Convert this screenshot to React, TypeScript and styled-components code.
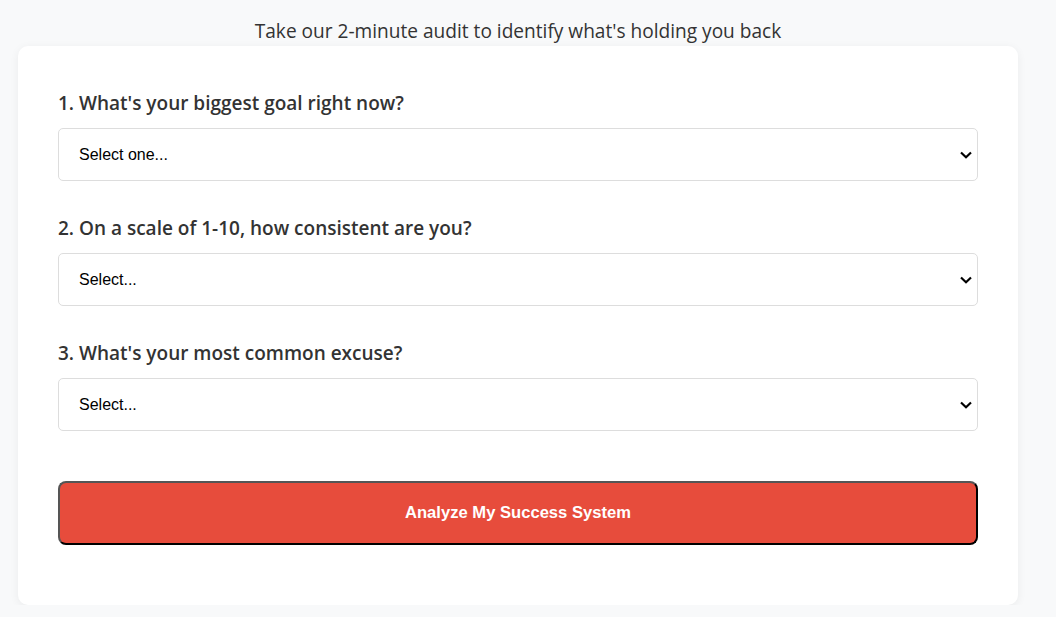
import React from 'react';
import styled, { createGlobalStyle } from 'styled-components';

const GlobalStyle = createGlobalStyle`
  html, body {
    margin: 0;
    padding: 0;
    background-color: #f8f9fa;
    font-family: "Open Sans", "Noto Sans", sans-serif;
    color: #333;
  }
`;

const Page = styled.div`
  display: flex;
  flex-direction: column;
  align-items: stretch;
  margin: 0 38px 0 18px;
  padding-top: 17px;
`;

const Subtitle = styled.p`
  margin: 0 0 1px;
  text-align: center;
  font-size: 19.1px;
  line-height: 28px;
  color: #333;
`;

const Card = styled.div`
  display: flex;
  flex-direction: column;
  background-color: #fff;
  border-radius: 10px;
  box-shadow: 0 2px 10px rgba(0, 0, 0, 0.06);
  padding: 44px 40px 60px;
`;

const Field = styled.div`
  display: flex;
  flex-direction: column;
  margin-bottom: 34px;

  &:last-of-type {
    margin-bottom: 50px;
  }
`;

const Label = styled.label`
  font-size: 19px;
  font-weight: 600;
  line-height: 26px;
  margin-bottom: 12px;
  color: #333;
`;

const SelectWrap = styled.div`
  position: relative;
`;

const Select = styled.select`
  appearance: none;
  width: 100%;
  height: 53px;
  padding: 0 40px 0 20px;
  font-family: "Liberation Sans", Arial, sans-serif;
  font-size: 16px;
  color: #000;
  background-color: #fff;
  border: 1px solid #ddd;
  border-radius: 5px;
`;

const Chevron = styled.svg`
  position: absolute;
  right: 6px;
  top: 50%;
  width: 12px;
  height: 8px;
  margin-top: -4px;
  pointer-events: none;
`;

const Button = styled.button`
  width: 100%;
  height: 64px;
  background-color: #e74c3c;
  color: #fff;
  font-family: "Liberation Sans", Arial, sans-serif;
  font-size: 16.6px;
  font-weight: 700;
  border: 2px solid;
  border-color: #555 #000 #000 #555;
  border-radius: 8px;
  cursor: pointer;
`;

const questions = [
  { label: "1. What's your biggest goal right now?", placeholder: 'Select one...' },
  { label: '2. On a scale of 1-10, how consistent are you?', placeholder: 'Select...' },
  { label: "3. What's your most common excuse?", placeholder: 'Select...' },
];

const App: React.FC = () => {
  return (
    <>
      <GlobalStyle />
      <Page>
        <Subtitle>Take our 2-minute audit to identify what's holding you back</Subtitle>
        <Card>
          {questions.map((q, i) => (
            <Field key={i}>
              <Label>{q.label}</Label>
              <SelectWrap>
                <Select defaultValue="">
                  <option value="">{q.placeholder}</option>
                </Select>
                <Chevron viewBox="0 0 12 8">
                  <path d="M1 1.5 L6 6.2 L11 1.5" fill="none" stroke="#000" strokeWidth="2.2" />
                </Chevron>
              </SelectWrap>
            </Field>
          ))}
          <Button>Analyze My Success System</Button>
        </Card>
      </Page>
    </>
  );
};

export default App;
